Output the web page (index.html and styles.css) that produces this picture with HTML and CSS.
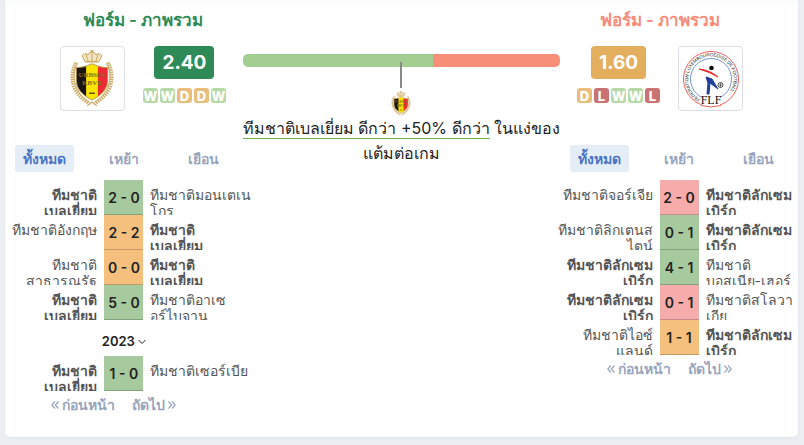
FILE: index.html
```html
<!DOCTYPE html>
<html lang="th">
<head>
<meta charset="utf-8">
<meta name="viewport" content="width=device-width, initial-scale=1">
<title>ฟอร์ม - ภาพรวม</title>
<link rel="stylesheet" href="styles.css">
</head>
<body>
<svg class="defs" aria-hidden="true">
  <symbol id="crest" viewBox="0 0 44 58">
    <g fill="none" stroke="#cdae6c">
      <path d="M6 13C-1 25 0 43 19 54M38 13c7 12 6 30-13 41" stroke-width="4" stroke-dasharray="1.600 .8"/>
      <path d="M7 13C1 25 2 42 21 55M37 13c6 12 5 29-14 42" stroke-width="1"/>
      <path d="M17 57l5-4 5 4" stroke-width="1.200"/>
    </g>
    <path d="M6 18q9 0 16-4q7 4 16 4v13q0 12-16 20Q6 43 6 31z" fill="#fae500"/>
    <path d="M6 18q5 0 10-2v31Q6 41 6 31z" fill="#181513"/>
    <path d="M28 16q4 2 10 2v13q0 9-10 16z" fill="#ee2b35"/>
    <path d="M6 18q9 0 16-4q7 4 16 4v13q0 12-16 20Q6 43 6 31z" fill="none" stroke="#bd994f"/>
    <g class="crest-text" text-anchor="middle"><text x="22" y="27">URBSFA</text><text x="22" y="36">KBVB</text></g>
    <path d="M19 44h6" stroke="#665012" stroke-width="1.500"/>
    <path d="M15 12L12 6q2-4 6-1q1-3 4-3t4 3q4-3 6 1l-3 6z" fill="#f3e6c6" stroke="#c9a25a"/>
    <path d="M22 0v12M20 1h4M16 5l2 6M28 5l-2 6M15 12h14" stroke="#c9a25a" fill="none"/>
  </symbol>
  <symbol id="prev" viewBox="0 0 8 8"><path d="M4 .5L.8 4 4 7.500M7.500 .5L4.300 4 7.500 7.500" fill="none" stroke="currentColor" stroke-width="1.200"/></symbol>
  <symbol id="next" viewBox="0 0 8 8"><path d="M.5 .5L3.700 4 .5 7.500M4 .5L7.200 4 4 7.500" fill="none" stroke="currentColor" stroke-width="1.200"/></symbol>
</svg>
<main class="card">
  <section class="side home">
    <header class="overview">
      <h2>ฟอร์ม - ภาพรวม</h2>
      <div class="summary">
        <div class="logo"><svg class="crest" role="img" aria-label="ทีมชาติเบลเยี่ยม"><use href="#crest"/></svg></div>
        <div class="rating"><strong>2.40</strong>
          <div class="form"><span class="w">W</span><span class="w">W</span><span class="d">D</span><span class="d">D</span><span class="w">W</span></div></div>
      </div>
    </header>
    <nav class="tabs"><button class="active">ทั้งหมด</button><button>เหย้า</button><button>เยือน</button></nav>
    <table>
      <tbody>
      <tr><td><div class="team"><b>ทีมชาติ<br>เบลเยี่ยม</b></div></td><td class="score win">2 - 0</td><td><div class="team">ทีมชาติมอนเตเน<br>โกร</div></td></tr>
      <tr><td><div class="team">ทีมชาติอังกฤษ</div></td><td class="score draw">2 - 2</td><td><div class="team"><b>ทีมชาติ<br>เบลเยี่ยม</b></div></td></tr>
      <tr><td><div class="team">ทีมชาติ<br>สาธารณรัฐ</div></td><td class="score draw">0 - 0</td><td><div class="team"><b>ทีมชาติ<br>เบลเยี่ยม</b></div></td></tr>
      <tr><td><div class="team"><b>ทีมชาติ<br>เบลเยี่ยม</b></div></td><td class="score win">5 - 0</td><td><div class="team">ทีมชาติอาเซ<br>อร์ไบจาน</div></td></tr>
      <tr><td colspan="3" class="year"><button>2023 <svg viewBox="0 0 8 8" aria-hidden="true"><path d="M.5 2L4 5.500 7.500 2" fill="none" stroke="currentColor"/></svg></button></td></tr>
      <tr><td><div class="team"><b>ทีมชาติ<br>เบลเยี่ยม</b></div></td><td class="score win">1 - 0</td><td><div class="team">ทีมชาติเซอร์เบีย</div></td></tr>
      </tbody>
    </table>
    <nav class="pager"><a href="#"><svg aria-hidden="true"><use href="#prev"/></svg>ก่อนหน้า</a><a href="#">ถัดไป<svg aria-hidden="true"><use href="#next"/></svg></a></nav>
  </section>

  <section class="compare">
    <div class="bar"><span class="bar-home"></span><span class="bar-away"></span></div>
    <div class="pointer"></div>
    <svg class="mini-crest" aria-hidden="true"><use href="#crest"/></svg>
    <p><span class="better">ทีมชาติเบลเยี่ยม ดีกว่า +50% ดีกว่า</span> ในแง่ของ<br>แต้มต่อเกม</p>
  </section>

  <section class="side away">
    <header class="overview">
      <h2>ฟอร์ม - ภาพรวม</h2>
      <div class="summary">
        <div class="rating"><strong>1.60</strong>
          <div class="form"><span class="d">D</span><span class="l">L</span><span class="w">W</span><span class="w">W</span><span class="l">L</span></div></div>
        <div class="logo"><svg class="flf" viewBox="0 0 58 58" role="img" aria-label="ทีมชาติลักเซมเบิร์ก">
          <circle cx="29" cy="29" r="27.500" fill="none" stroke="#ee5e5e"/>
          <circle cx="29" cy="29" r="20.500" fill="none" stroke="#7797cf"/>
          <path id="ring" d="M18 49A22.800 22.800 0 1 1 40 49" fill="none"/>
          <path d="M20 44h18v14H20z" fill="#fff"/>
          <text class="ring-text"><textPath href="#ring">FEDERATION LUXEMBOURGEOISE DE FOOTBALL</textPath></text>
          <text class="flf-text" x="29" y="54" text-anchor="middle">FLF</text>
          <path d="M19 55.500q10 3 20 0" fill="none" stroke="#ee5e5e"/>
          <circle cx="29.500" cy="18" r="2.300" fill="#111"/>
          <path d="M17 19q11 1 19 8q-8-5-19-8z" fill="#e52828" stroke="#e52828"/>
          <path d="M24 27l6 2 6 10-8-6-1 11h-2l1-11z" fill="#203f98" stroke="#203f98"/>
          <circle cx="38.500" cy="35" r="2.500" fill="#fff" stroke="#222" stroke-width=".8"/><path d="M37 35h3M38.500 33v4" stroke="#222" stroke-width=".6"/>
        </svg></div>
      </div>
    </header>
    <nav class="tabs"><button class="active">ทั้งหมด</button><button>เหย้า</button><button>เยือน</button></nav>
    <table>
      <tbody>
      <tr><td><div class="team">ทีมชาติจอร์เจีย</div></td><td class="score loss">2 - 0</td><td><div class="team"><b>ทีมชาติลักเซม<br>เบิร์ก</b></div></td></tr>
      <tr><td><div class="team">ทีมชาติลิกเตนส<br>ไตน์</div></td><td class="score win">0 - 1</td><td><div class="team"><b>ทีมชาติลักเซม<br>เบิร์ก</b></div></td></tr>
      <tr><td><div class="team"><b>ทีมชาติลักเซม<br>เบิร์ก</b></div></td><td class="score win">4 - 1</td><td><div class="team">ทีมชาติ<br>บอสเนีย-เฮอร์</div></td></tr>
      <tr><td><div class="team"><b>ทีมชาติลักเซม<br>เบิร์ก</b></div></td><td class="score loss">0 - 1</td><td><div class="team">ทีมชาติสโลวา<br>เกีย</div></td></tr>
      <tr><td><div class="team">ทีมชาติไอซ์<br>แลนด์</div></td><td class="score draw">1 - 1</td><td><div class="team"><b>ทีมชาติลักเซม<br>เบิร์ก</b></div></td></tr>
      </tbody>
    </table>
    <nav class="pager"><a href="#"><svg aria-hidden="true"><use href="#prev"/></svg>ก่อนหน้า</a><a href="#">ถัดไป<svg aria-hidden="true"><use href="#next"/></svg></a></nav>
  </section>
</main>
</body>
</html>
```
FILE: styles.css
```css
* { box-sizing: border-box; }
body {
  margin: 0;
  padding: 0 6px 8px 5px;
  background: #ebeff3;
  color: #222;
  font: 14px/16px Inter, "Noto Sans", sans-serif;
}
button { border: 0; padding: 0; background: none; font: inherit; color: inherit; cursor: pointer; }
.defs { position: absolute; width: 0; height: 0; }
.card {
  display: grid;
  grid-template-columns: minmax(0, 3fr) minmax(0, 4fr) minmax(0, 3fr);
  padding-bottom: 24px;
  background: linear-gradient(#f9fafa, #fff 6px);
  border-radius: 0 0 5px 5px;
  box-shadow: 0 1px 4px #dfe5ea;
}
.overview { padding-top: 8px; height: 145px; }
.home .overview { padding-left: 38px; }
.away .overview { padding-right: 38px; }
h2 { margin: 0 0 14px; font-size: 17px; line-height: 24px; font-weight: 600; text-align: center; }
.home h2 { color: #2e8b57; }
.away h2 { color: #f78c78; }
.summary { display: flex; justify-content: center; gap: 18px; }
.logo { display: flex; width: 65px; height: 65px; align-items: center; justify-content: center; border: 1px solid #dddde6; border-radius: 4px; background: #fff; }
.crest { width: 44px; height: 57px; }
.crest-text { font: bold 7px "Liberation Serif", serif; fill: #8a6a1c; }
.flf { width: 58px; height: 58px; }
.ring-text { font: 4.500px "Liberation Sans", sans-serif; fill: #111; }
.flf-text { font: 12px "Liberation Serif", serif; fill: #111; }
.rating { display: flex; flex-direction: column; align-items: center; gap: 9px; }
.rating strong { padding: 0 8px; border-radius: 4px; color: #fff; font-size: 19px; line-height: 33px; }
.home strong { background: #2e8b57; }
.away strong { background: #e3af5e; }
.form { display: flex; gap: 2px; }
.form span { display: flex; justify-content: center; width: 15px; height: 15px; border-radius: 3px; color: #fff; font-size: 13px; line-height: 17px; font-weight: 800; }
.w { background: #b7d9a8; }
.d { background: #e9be7c; }
.l { background: #c97472; }
.tabs { display: grid; grid-template-columns: repeat(3, 1fr); justify-items: center; margin-bottom: 8px; }
.tabs button { padding: 0 8px; height: 27px; border-radius: 3px; color: #98a5bd; font-weight: 600; line-height: 27px; }
.tabs .active { background: #e5edf7; color: #4a75c4; }
table { width: 100%; border-collapse: collapse; table-layout: fixed; }
td { padding: 0; width: 50%; vertical-align: top; }
.team { height: 35px; padding: 7px 0 0 7px; overflow-x: visible; overflow-y: clip; color: #555; white-space: nowrap; }
td:first-child .team { display: flex; justify-content: flex-end; padding: 7px 7px 0 0; text-align: right; }
b { font-weight: 700; }
.score { width: 39px; height: 35px; font-weight: 600; line-height: 34px; text-align: center; vertical-align: middle; box-shadow: inset 0 -1px #0003; }
.win { background: #a6ca9e; }
.draw { background: #f5c07e; }
.loss { background: #f5acaa; }
.year { height: 36px; text-align: center; vertical-align: middle; }
.year button { height: 16px; padding-top: 6px; font-size: 13px; font-weight: 600; }
.year svg { width: 8px; height: 8px; }
.pager { display: flex; justify-content: center; gap: 17px; padding: 6px 20px 0 0; }
.pager a { display: flex; align-items: center; gap: 3px; color: #98a5bd; font-weight: 600; text-decoration: none; }
.pager svg { width: 8px; height: 8px; }
.compare { display: flex; flex-direction: column; align-items: center; padding-top: 54px; }
.bar { display: flex; width: 100%; height: 13px; border-radius: 5px; overflow: hidden; }
.bar-home { flex: 3; background: #a3ce92; }
.bar-away { flex: 2; background: #f68e78; }
.pointer { width: 2px; height: 26px; margin-top: -5px; background: #888; }
.mini-crest { width: 20px; height: 25px; margin-top: 3px; }
p { margin: 0; font-size: 16px; line-height: 25px; text-align: center; white-space: nowrap; }
.better { border-bottom: 1px solid #70b64a; }
```
